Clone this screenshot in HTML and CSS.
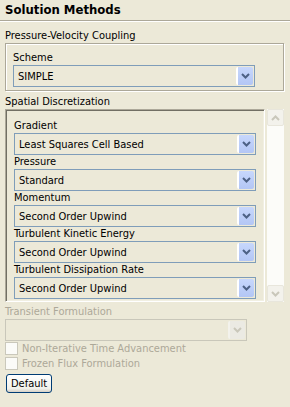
FILE: index.html
```html
<!DOCTYPE html>
<html>
    <head>
        <meta charset="UTF-8" />
        <title>Solution Methods</title>
<link rel="stylesheet" href="styles.css">
    </head>
    <body>
<div class="title">Solution Methods</div>
<div class="panel">
	<div class="caption">Pressure-Velocity Coupling</div>
	<div class="group">
		<div class="label">Scheme</div>
		<div class="combo"><span>SIMPLE</span><i class="drop"><svg width="9" height="6" viewBox="0 0 9 6"><path d="M1 1 L4.5 4.5 L8 1" fill="none" stroke="#4d6185" stroke-width="2"/></svg></i></div>
	</div>

	<div class="caption spaced">Spatial Discretization</div>
	<div class="scroller">
		<div class="pane">
			<div class="label">Gradient</div>
			<div class="combo"><span>Least Squares Cell Based</span><i class="drop"><svg width="9" height="6" viewBox="0 0 9 6"><path d="M1 1 L4.5 4.5 L8 1" fill="none" stroke="#4d6185" stroke-width="2"/></svg></i></div>
			<div class="label">Pressure</div>
			<div class="combo"><span>Standard</span><i class="drop"><svg width="9" height="6" viewBox="0 0 9 6"><path d="M1 1 L4.5 4.5 L8 1" fill="none" stroke="#4d6185" stroke-width="2"/></svg></i></div>
			<div class="label">Momentum</div>
			<div class="combo"><span>Second Order Upwind</span><i class="drop"><svg width="9" height="6" viewBox="0 0 9 6"><path d="M1 1 L4.5 4.5 L8 1" fill="none" stroke="#4d6185" stroke-width="2"/></svg></i></div>
			<div class="label">Turbulent Kinetic Energy</div>
			<div class="combo"><span>Second Order Upwind</span><i class="drop"><svg width="9" height="6" viewBox="0 0 9 6"><path d="M1 1 L4.5 4.5 L8 1" fill="none" stroke="#4d6185" stroke-width="2"/></svg></i></div>
			<div class="label">Turbulent Dissipation Rate</div>
			<div class="combo"><span>Second Order Upwind</span><i class="drop"><svg width="9" height="6" viewBox="0 0 9 6"><path d="M1 1 L4.5 4.5 L8 1" fill="none" stroke="#4d6185" stroke-width="2"/></svg></i></div>
		</div>
		<div class="vbar">
			<div class="arrow"><svg width="9" height="6" viewBox="0 0 9 6"><path d="M1 5 L4.5 1.5 L8 5" fill="none" stroke="#c9c7ba" stroke-width="2"/></svg></div>
			<div class="arrow"><svg width="9" height="6" viewBox="0 0 9 6"><path d="M1 1 L4.5 4.5 L8 1" fill="none" stroke="#c9c7ba" stroke-width="2"/></svg></div>
		</div>
	</div>

	<div class="caption off">Transient Formulation</div>
	<div class="combo disabled"><span></span><i class="drop"><svg width="9" height="6" viewBox="0 0 9 6"><path d="M1 1 L4.5 4.5 L8 1" fill="none" stroke="#c9c7ba" stroke-width="2"/></svg></i></div>
	<label class="check"><i class="box"></i><span>Non-Iterative Time Advancement</span></label>
	<label class="check"><i class="box"></i><span>Frozen Flux Formulation</span></label>
	<button type="button" class="btn">Default</button>
</div>
    </body>
</html>
```

FILE: styles.css
```css
body {
	margin: 0;
	background: #ece9d8;
	font-family: "DejaVu Sans", "Liberation Sans", sans-serif;
	font-stretch: condensed;
	font-size: 11px;
	color: #000;
}

.title {
	height: 20px;
	padding-left: 5px;
	line-height: 20px;
	font-size: 13px;
	font-weight: bold;
	border-bottom: 1px solid #aca899;
	box-shadow: 0 1px 0 #fff;
}

.panel {
	padding: 8px 5px 0 5px;
}

.caption,
.label {
	height: 14px;
	line-height: 14px;
	white-space: nowrap;
}

.caption.spaced {
	margin-top: 4px;
}

.caption.off {
	margin-top: 3px;
	color: #aca899;
}

.group {
	width: 270px;
	padding: 7px 0 3px 7px;
	border: 1px solid #aca899;
	box-shadow: 1px 1px 0 #fff, inset 1px 1px 0 #fff;
}

.combo {
	display: flex;
	align-items: center;
	width: 240px;
	height: 20px;
	border: 1px solid #7f9db9;
	background: #ece9d8;
}

.combo span {
	flex: 1;
	padding-left: 4px;
	white-space: nowrap;
	overflow: hidden;
}

.drop {
	display: flex;
	align-items: center;
	justify-content: center;
	width: 15px;
	height: 18px;
	margin-right: 1px;
	border-left: 2px solid #fff;
	background: linear-gradient(#c7d7fc, #b3c6f5);
	border-radius: 2px;
}

.scroller {
	display: flex;
	gap: 2px;
	height: 193px;
}

.pane {
	width: 243px;
	padding: 9px 7px 0 8px;
	overflow: hidden;
	border-top: 1px solid #aca899;
	border-left: 1px solid #aca899;
	border-right: 1px solid #fff;
	border-bottom: 1px solid #fff;
	box-shadow: inset 1px 1px 0 #716f64, inset -1px -1px 0 #f1efe2;
}

.vbar {
	display: flex;
	flex-direction: column;
	justify-content: space-between;
	width: 17px;
	background: #fcfcf9;
}

.arrow {
	display: flex;
	align-items: center;
	justify-content: center;
	height: 15px;
	border: 1px solid #e8e6dc;
	border-radius: 2px;
	background: #f3f2ec;
}

.combo.disabled {
	border-color: #c9c7ba;
}

.combo.disabled .drop {
	border-left-color: #f3f2ec;
	background: #ebeae3;
}

.check {
	display: flex;
	align-items: center;
	gap: 4px;
	height: 15px;
	color: #aca899;
	white-space: nowrap;
}

.box {
	width: 11px;
	height: 11px;
	border: 1px solid #cac8bb;
	background: #fbfbf8;
}

.btn {
	margin: 3px 0 0 1px;
	padding: 0 4px;
	height: 19px;
	font: inherit;
	color: #000;
	border: 1px solid #003c74;
	border-radius: 3px;
	background: linear-gradient(#fff, #f0f0ea 80%, #d6d0c5);
}
```
